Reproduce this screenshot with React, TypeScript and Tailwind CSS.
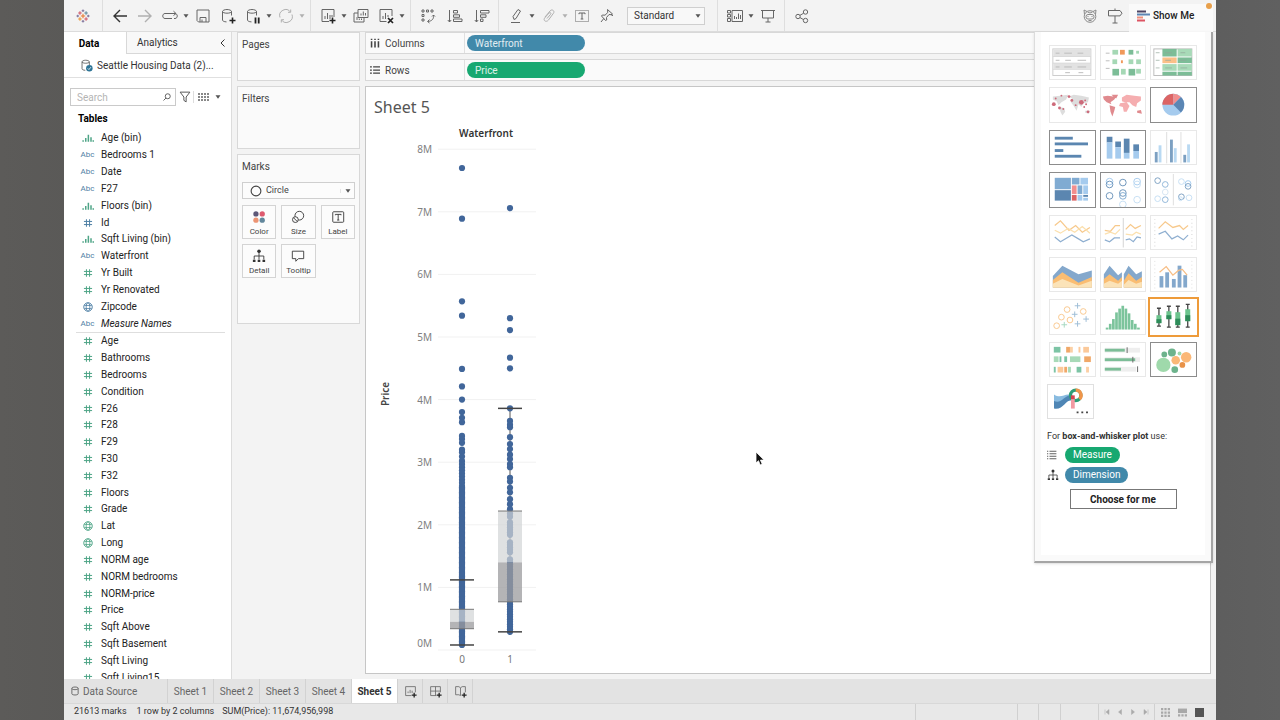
import React from 'react';

type FieldKind = 'bin' | 'abc' | 'num' | 'geo';

interface Field {
  name: string;
  kind: FieldKind;
  tone: string;
  italic?: boolean;
}

const GREEN = 'text-[#4fa587]';
const BLUE = 'text-[#4f80a5]';

const dimensions: Field[] = [
  { name: 'Age (bin)', kind: 'bin', tone: GREEN },
  { name: 'Bedrooms 1', kind: 'abc', tone: BLUE },
  { name: 'Date', kind: 'abc', tone: BLUE },
  { name: 'F27', kind: 'abc', tone: BLUE },
  { name: 'Floors (bin)', kind: 'bin', tone: GREEN },
  { name: 'Id', kind: 'num', tone: BLUE },
  { name: 'Sqft Living (bin)', kind: 'bin', tone: GREEN },
  { name: 'Waterfront', kind: 'abc', tone: BLUE },
  { name: 'Yr Built', kind: 'num', tone: GREEN },
  { name: 'Yr Renovated', kind: 'num', tone: GREEN },
  { name: 'Zipcode', kind: 'geo', tone: BLUE },
  { name: 'Measure Names', kind: 'abc', tone: BLUE, italic: true },
];

const measures: Field[] = [
  'Age', 'Bathrooms', 'Bedrooms', 'Condition', 'F26', 'F28', 'F29', 'F30', 'F32', 'Floors', 'Grade',
  'Lat', 'Long', 'NORM age', 'NORM bedrooms', 'NORM-price', 'Price', 'Sqft Above', 'Sqft Basement',
  'Sqft Living', 'Sqft Living15',
].map((name) => ({ name, kind: name === 'Lat' || name === 'Long' ? 'geo' : 'num', tone: GREEN }));

interface IconProps {
  children: React.ReactNode;
  className?: string;
}

const Icon: React.FC<IconProps> = ({ children, className = 'size-4' }) => (
  <svg viewBox="0 0 16 16" className={`shrink-0 ${className}`} fill="none" stroke="currentColor" aria-hidden="true">
    {children}
  </svg>
);

const Caret: React.FC<{ className?: string }> = ({ className = 'text-[#555]' }) => (
  <svg viewBox="0 0 6 4" className={`h-1 w-1.5 shrink-0 ${className}`} fill="currentColor" aria-hidden="true">
    <path d="M0.5 0.3h5L3 3.8z" />
  </svg>
);

const FieldIcon: React.FC<{ kind: FieldKind }> = ({ kind }) => {
  if (kind === 'abc') return <span className="text-[8px] leading-none">Abc</span>;
  if (kind === 'bin') {
    return (
      <Icon className="size-3">
        <path strokeWidth="2" d="M1.500 13v-2M5 13V8M8.500 13V3.500M12 13V7M15 13v-2" />
      </Icon>
    );
  }
  if (kind === 'geo') {
    return (
      <Icon className="size-[10px]">
        <circle cx="8" cy="8" r="6.800" strokeWidth="1.500" />
        <ellipse cx="8" cy="8" rx="3" ry="6.800" strokeWidth="1.300" />
        <path strokeWidth="1.300" d="M2 5.500h12M2 10.500h12" />
      </Icon>
    );
  }
  return (
    <Icon className="size-[10px]">
      <path strokeWidth="1.600" d="M5.500 2v12M10.500 2v12M1.500 5.500h13M1.500 10.500h13" />
    </Icon>
  );
};

const FieldRow: React.FC<{ field: Field }> = ({ field }) => (
  <li className="flex items-center gap-1.5 pl-4 text-[10px] leading-4 text-[#222]">
    <span className={`flex w-[15px] justify-center ${field.tone}`}>
      <FieldIcon kind={field.kind} />
    </span>
    <span className={field.italic ? 'italic' : ''}>{field.name}</span>
  </li>
);

/* ---------- toolbar ---------- */

interface ToolProps {
  label: string;
  children: React.ReactNode;
  caret?: boolean;
  muted?: boolean;
}

const Tool: React.FC<ToolProps> = ({ label, children, caret, muted }) => (
  <button aria-label={label} className={`flex items-center ${muted ? 'text-[#b0b0b0]' : 'text-[#666]'}`}>
    <span className="flex w-[25px] justify-center">
      <Icon>{children}</Icon>
    </span>
    {caret && (
      <span className="flex w-2 justify-center">
        <Caret className={muted ? 'text-[#b0b0b0]' : 'text-[#555]'} />
      </span>
    )}
  </button>
);

const Divider: React.FC<{ className?: string }> = ({ className = 'mx-1' }) => (
  <span className={`h-full w-px shrink-0 bg-[#dedede] ${className}`} />
);

const cylinder = <path d="M2.500 3.500c0-1 2-2 4.500-2s4.500 1 4.500 2-2 1.700-4.500 1.700-4.500-.7-4.500-1.700v8.500c0 1 1.500 1.800 4 1.900M11.500 3.500v4" />;
const plus = <path stroke="#222" strokeWidth="1.600" d="M12.500 9.500v6M9.500 12.500h6" />;

const Toolbar: React.FC = () => (
  <header className="flex h-8 shrink-0 items-center border-b border-[#dcdcdc] bg-[#f3f3f3]">
    <span className="flex w-[38px] justify-center">
      <svg viewBox="0 0 16 16" className="size-[14px]" strokeWidth="1.200" aria-label="Tableau">
        <path stroke="#e8762c" d="M8 5.500v5M5.500 8h5" />
        <path stroke="#c72037" d="M4.500 2.500v4M2.500 4.500h4M11.500 9.500v4M9.500 11.500h4" opacity=".75" />
        <path stroke="#5b879b" d="M11.500 2.500v4M9.500 4.500h4" />
        <path stroke="#eb912c" d="M4.500 9.500v4M2.500 11.500h4" />
        <path stroke="#7c7098" d="M8 .5v3M6.500 2h3M8 12.500v3M6.500 14h3M2 6.500v3M.5 8h3M14 6.500v3M12.500 8h3" />
      </svg>
    </span>
    <Divider className="mr-1" />
    <Tool label="Undo"><path strokeWidth="1.400" stroke="#333" d="M15 8H2M8 2L2 8l6 6" /></Tool>
    <Tool label="Redo" muted><path strokeWidth="1.400" d="M1 8h13M8 2l6 6-6 6" /></Tool>
    <Tool label="Replay" caret><path d="M10 10.500H3c-3 0-3-5 0-5h10c3 0 3 5 0 5h-1M11.500 3.200L14 5.500l-2.500 2" /></Tool>
    <Tool label="Save"><path d="M2 2h12v12H3.500L2 12.500zM5 14V9.500h6V14M7 11.500V14" /></Tool>
    <Tool label="New data source">{cylinder}{plus}</Tool>
    <Tool label="Pause auto updates" caret>{cylinder}<path stroke="#222" strokeWidth="1.800" d="M10.500 9.500v6M13.700 9.500v6" /></Tool>
    <Tool label="Run update" caret muted><path d="M2 9.500A6 6 0 0 1 12.500 4M14 6.500A6 6 0 0 1 3.500 12M12.700 1.500V4.300H10M3.300 14.500V11.700H6" /></Tool>
    <Divider />
    <Tool label="New worksheet" caret><path d="M9 13.500H2v-12h12V9M5 11V8M7.500 11V5M10 11V7M12 9V7" />{plus}</Tool>
    <Tool label="Duplicate"><path d="M5 1.500h10v8H5zM5 5H1v9h10V9.500M8 7.500v-2M10.300 7.500V3.500M12.500 7.500V5M4 12v-3M6.300 12V10.500M8.500 12v-1.500" /></Tool>
    <Tool label="Clear sheet" caret><path d="M8.500 13.500H2v-12h12V8M5 11V8M7.500 11V5M10 9V7" /><path stroke="#222" strokeWidth="1.700" d="M10 10l5 5M15 10l-5 5" /></Tool>
    <Divider />
    <span className="flex gap-0.5">
      <Tool label="Swap rows and columns"><path d="M2 2h2v2H2zM6.500 2h2v2h-2zM11 2h2v2h-2zM2 6.500h2v2H2zM2 11h2v2H2zM13.500 7c.5 4-1.500 6-5.500 6.500M12 8.500L13.500 7 15 8.500M9.500 11.500l-2 2 2 1.500" /></Tool>
      <Tool label="Sort ascending"><path d="M2.500 2v12M.8 12l1.700 2 1.700-2M6.500 2.500h4V5h-4zM6.500 6.800h6v2.500h-6zM6.500 11h8.500v2.500H6.500z" /></Tool>
      <Tool label="Sort descending"><path d="M2.500 2v12M.8 12l1.700 2 1.700-2M6.500 2.500H15V5H6.500zM6.500 6.800h5.500v2.500H6.500zM6.500 11H9v2.500H6.500z" /></Tool>
    </span>
    <Divider />
    <Tool label="Highlight" caret><path d="M6 11.500L5 8.500l5-7 2.500 1.500-4.500 7.500-2 1zM3 14.500h9" /></Tool>
    <Tool label="Group members" caret muted><path d="M4 9l5-6c2-2.500 5 0 3.500 2.200L7.500 12c-2 2.500-5.500 1-4-1.800L8 5c1.300-1 2.500 0 1.600 1.300L6 10.500" /></Tool>
    <Tool label="Show mark labels">
      <path strokeDasharray="1 1" d="M1.500 2.500h13v11h-13z" />
      <path d="M5 6.200V5h6v1.200M8 5v6M6.700 11h2.600" />
    </Tool>
    <Tool label="Fix axes"><path d="M8.500 1.500l5 4.500-1.500.7-2-.2-2.500 3 .2 2.500-1.200.5L2.500 8l.8-1 2.700.2L8.800 4.500zM4.800 10.500L2 14M12 6.700l2 1" /></Tool>
    <span className="relative ml-2 flex items-center">
      <select aria-label="Fit" className="h-[18px] w-[78px] appearance-none border border-[#cfcfcf] bg-[#f8f8f8] pl-1.5 text-[10px] text-[#333]">
        <option>Standard</option>
      </select>
      <span className="pointer-events-none absolute right-1"><Caret /></span>
    </span>
    <Divider className="mr-1 ml-3" />
    <Tool label="Show cards" caret><path d="M0.500 2.500h3v2.500h-3zM0.500 6.500h3V9h-3zM0.500 10.500h3v3h-3zM5 2.500h10.500v11H5zM7.500 11V8M9.500 11V9M11.500 11V5.500M13.500 11V7" /></Tool>
    <Tool label="Presentation mode"><path d="M1 2.500h14M2.500 2.500v7.500h11V2.500M8 10v4M5.500 14h5" /></Tool>
    <Divider />
    <Tool label="Share"><circle cx="4" cy="8.500" r="2.200" /><circle cx="11.500" cy="4" r="2.200" /><circle cx="11.500" cy="12.500" r="2.200" /><path d="M6 7.300l3.500-2M6 9.600l3.500 2" /></Tool>
    <span className="ml-auto flex">
      <Tool label="Einstein" muted>
        <g stroke="#8a8a8a">
          <circle cx="8" cy="8.500" r="5.800" />
          <path d="M2.500 6.500L2 2l3 1.500M13.500 6.500L14 2l-3 1.500M5.500 4l2.500 1 2.500-1" />
          <rect x="4" y="6.500" width="8" height="4.500" rx="2" />
          <path d="M6 8v1M10 8v1M6.500 12.500h3" />
        </g>
      </Tool>
      <Tool label="Guide"><path d="M8 .5v2M8 8v7M5.500 15h5M1.500 2.500H13l2 2.700-2 2.700H1.500z" /></Tool>
    </span>
    <button className="mt-1 mr-[3px] ml-0.5 flex h-7 w-[84px] items-center gap-0.5 bg-[#fafafa] pb-1 pl-2 text-[10px] font-medium text-[#222]">
      <svg viewBox="0 0 14 14" className="size-[14px]" aria-hidden="true">
        <path stroke="#4c4464" strokeWidth="2" d="M0 2.500h9" />
        <path stroke="#5c86b4" strokeWidth="2" d="M0 5.500h13" />
        <path stroke="#f0907c" strokeWidth="2" d="M0 8.500h6" />
        <path stroke="#dd5463" strokeWidth="2" d="M0 11.500h8" />
      </svg>
      Show Me
    </button>
  </header>
);

/* ---------- data pane ---------- */

const DataPane: React.FC = () => (
  <aside className="flex w-[168px] shrink-0 flex-col overflow-hidden border-r border-[#dcdcdc] bg-white text-[10px] text-[#333]">
    <div className="flex h-[22px] shrink-0">
      <button className="w-[62px] pr-3 text-center font-bold text-black">Data</button>
      <button className="flex flex-1 items-center justify-between border-b border-l border-[#d8d8d8] bg-[#f8f8f8] pr-1 pl-2.5">
        Analytics
        <Icon className="size-2"><path strokeWidth="2" d="M11 1L4 8l7 7" /></Icon>
      </button>
    </div>
    <button className="flex h-6 shrink-0 items-center gap-1 border-b border-[#e0e0e0] pl-4">
      <Icon className="size-[13px] text-[#555]">
        {cylinder}
        <circle cx="11.500" cy="11.500" r="4" fill="#2d7496" stroke="none" />
        <path stroke="#fff" d="M9.500 11.500l1.500 1.500 2.500-3" />
      </Icon>
      Seattle Housing Data (2)...
    </button>
    <div className="mt-2.5 flex h-[18px] shrink-0 items-center pl-1.5 text-[#555]">
      <label className="flex h-full w-[106px] items-center border border-[#cacaca] pr-1 pl-1.5">
        <input aria-label="Search fields" placeholder="Search" className="w-full min-w-0 outline-none placeholder:text-[#b4b4b4]" />
        <Icon className="size-2"><circle cx="9.500" cy="6.500" r="5" strokeWidth="1.800" /><path strokeWidth="1.800" d="M6 10l-5 5" /></Icon>
      </label>
      <button aria-label="Filter fields" className="ml-[3px]">
        <Icon className="size-3"><path strokeWidth="1.300" d="M1.500 1.500h13L9.500 8v6.500l-3-2V8z" /></Icon>
      </button>
      <span className="mx-0.5 h-3 w-px bg-[#ddd]" />
      <button aria-label="View as" className="ml-0.5 flex items-center gap-1.5">
        <svg viewBox="0 0 11 8" className="h-2 w-[11px]" fill="#888" aria-hidden="true">
          {[0, 3, 6].map((y) => [0, 3, 6, 9].map((x) => <rect key={`${x}-${y}`} x={x} y={y} width="2" height="2" />))}
        </svg>
        <Caret />
      </button>
    </div>
    <h2 className="mt-1.5 h-[18px] shrink-0 pl-3.5 leading-[14px] font-bold text-black">Tables</h2>
    <ul className="grid h-[202px] shrink-0 auto-rows-fr">
      {dimensions.map((f) => <FieldRow key={f.name} field={f} />)}
    </ul>
    <hr className="mr-1.5 ml-3 shrink-0 border-[#dedede]" />
    <ul className="grid h-[353px] shrink-0 auto-rows-fr">
      {measures.map((f) => <FieldRow key={f.name} field={f} />)}
    </ul>
  </aside>
);

/* ---------- cards ---------- */

const hierarchy = (
  <>
    <circle cx="8" cy="2.500" r="2" fill="currentColor" stroke="none" />
    <path d="M8 3v9M2.500 12V8h11v4" />
    <path strokeWidth="2.500" d="M1 13.500h3M6.500 13.500h3M12 13.500h3" />
  </>
);

const markButtons = [
  {
    label: 'Color',
    icon: (
      <g stroke="none">
        <circle cx="4.500" cy="4.500" r="3" fill="#5d5878" />
        <circle cx="11.700" cy="4.500" r="3" fill="#dd5a6e" />
        <circle cx="4.500" cy="11.700" r="3" fill="#ec9473" />
        <circle cx="11.700" cy="11.700" r="3" fill="#62879c" />
      </g>
    ),
  },
  { label: 'Size', icon: <><circle cx="9.500" cy="6.500" r="5" /><circle cx="5" cy="11" r="3.300" fill="#fafafa" /><path d="M3 9l4 4" /></> },
  { label: 'Label', icon: <><rect x="2" y="2" width="12.500" height="12" rx="1" /><path d="M5 6V5h6.500v1M8.200 5v6.500M7 11.500h2.500" /></> },
  { label: 'Detail', icon: hierarchy },
  { label: 'Tooltip', icon: <path d="M1.500 2.500h13v8.500H8.500L5.500 14v-3h-4z" /> },
];

const Cards: React.FC = () => (
  <div className="flex w-[133px] shrink-0 flex-col gap-[5px] bg-[#f3f3f3] pr-[5px] pl-[5px] text-[10px] text-[#444]">
    <section className="h-[49px] border border-[#d8d8d8] bg-[#fafafa] px-1 pt-1"><h2>Pages</h2></section>
    <section className="h-[63px] border border-[#d8d8d8] bg-[#fafafa] px-1 pt-1"><h2>Filters</h2></section>
    <section className="h-[170px] border border-[#d8d8d8] bg-[#fafafa] px-1 pt-1">
      <h2>Marks</h2>
      <div className="relative mt-2 flex items-center">
        <select aria-label="Mark type" className="h-[17px] w-full appearance-none border border-[#cfcfcf] bg-[#fcfcfc] pl-[23px] text-[9px]">
          <option>Circle</option>
        </select>
        <Icon className="pointer-events-none absolute left-2 size-3"><circle cx="8" cy="8" r="6.500" strokeWidth="1.500" /></Icon>
        <span className="pointer-events-none absolute right-1 border-l border-[#e4e4e4] pl-1"><Caret /></span>
      </div>
      <div className="mt-1.5 grid grid-cols-3 gap-[5px]">
        {markButtons.map((m) => (
          <button key={m.label} className="flex h-[34px] flex-col items-center justify-between border border-[#d4d4d4] bg-[#fcfcfc] pt-1 text-[8px] leading-3">
            <Icon className="size-[14px] text-[#333]">{m.icon}</Icon>
            {m.label}
          </button>
        ))}
      </div>
    </section>
  </div>
);

/* ---------- shelves and chart ---------- */

interface ShelfProps {
  label: string;
  pill: string;
  color: string;
  icon: React.ReactNode;
}

const Shelf: React.FC<ShelfProps> = ({ label, pill, color, icon }) => (
  <div className="flex h-[22px] items-center border border-[#d8d8d8] bg-[#fafafa] text-[10px] text-[#444]">
    <div className="flex h-full w-[99px] items-center gap-[5px] border-r border-[#e0e0e0] pl-1">
      <Icon className="size-[10px]">{icon}</Icon>
      {label}
    </div>
    <button className={`ml-0.5 h-4 w-[118px] rounded-full px-2 text-left text-white/85 ${color}`}>{pill}</button>
  </div>
);

// vertical scale: values in millions, zero sits at y = 530
const scale = (v: number) => 530 - v * 62.6;

const range = (from: number, to: number, step: number) =>
  Array.from({ length: Math.round((from - to) / step) + 1 }, (_, i) => from - i * step);

const groups = [
  {
    label: '0',
    x: 96,
    points: [7.7, 6.89, 5.57, 5.34, 4.49, 4.21, 4, 3.8, 3.71, 3.64, 3.42, 3.37, 3.31, 3.2, 3.16, 3.09, ...range(3.02, 2.6, 0.05), ...range(2.6, 0.08, 0.02)],
    box: { low: 0.08, q1: 0.34, median: 0.45, q3: 0.65, high: 1.12 },
  },
  {
    label: '1',
    x: 144,
    points: [7.06, 5.3, 5.11, 4.67, 4.5, 3.86, 3.66, 3.6, 3.56, 3.4, 3.29, 3.21, 3.12, 3.05, 2.97, 2.92, 2.75, 2.69, 2.59, 2.52, 2.41, 2.33, 2.25, 2.18, 2.13, ...range(2.04, 1.82, 0.04), ...range(1.72, 1.54, 0.04), ...range(1.45, 0.29, 0.04)],
    box: { low: 0.29, q1: 0.77, median: 1.4, q3: 2.22, high: 3.86 },
  },
];

const Chart: React.FC = () => (
  <svg viewBox="0 0 190 550" className="block h-[550px] w-[190px] font-['Noto_Sans',sans-serif] text-[10px]" role="img" aria-label="Price by Waterfront">
    <text x="120" y="17" textAnchor="middle" className="font-semibold" fill="#333">Waterfront</text>
    <text transform="translate(23 274) rotate(-90)" textAnchor="middle" className="font-semibold" fill="#444">Price</text>
    {range(8, 0, 1).map((v) => (
      <g key={v}>
        <line x1="72" x2="170" y1={scale(v)} y2={scale(v)} stroke="#f1f1f1" />
        <text x="66" y={v === 0 ? 527 : scale(v) + 4} textAnchor="end" fill="#808080">{v}M</text>
      </g>
    ))}
    {groups.map(({ label, x, points, box }) => (
      <g key={label}>
        <line x1={x} x2={x} y1={scale(box.high)} y2={scale(box.low)} stroke="#555" />
        {points.map((v, i) => <circle key={i} cx={x} cy={scale(v)} r="3.100" fill="#41669a" />)}
        <rect x={x - 12} width="24" y={scale(box.q3)} height={scale(box.median) - scale(box.q3)} fill="#d2d4d5" fillOpacity=".7" />
        <rect x={x - 12} width="24" y={scale(box.median)} height={scale(box.q1) - scale(box.median)} fill="#9b9b9d" fillOpacity=".75" />
        {[box.q3, box.q1].map((v) => <line key={v} x1={x - 12} x2={x + 12} y1={scale(v)} y2={scale(v)} stroke="#777" />)}
        {[box.high, box.low].map((v) => <line key={v} x1={x - 12} x2={x + 12} y1={scale(v)} y2={scale(v)} stroke="#444" strokeWidth="1.500" />)}
        <text x={x} y="543" textAnchor="middle" fill="#777">{label}</text>
      </g>
    ))}
  </svg>
);

const Worksheet: React.FC = () => (
  <main className="flex min-w-0 flex-1 flex-col gap-[5px] bg-[#f3f3f3] pr-[5px] pb-[5px]">
    <Shelf label="Columns" pill="Waterfront" color="bg-[#4189aa]" icon={<path strokeWidth="2.500" d="M2.500 1v2M2.500 5v10M8 1v2M8 5v10M13.500 1v2M13.500 5v10" />} />
    <Shelf label="Rows" pill="Price" color="bg-[#17a871]" icon={<path strokeWidth="2" d="M0 3h3M5 3h11M0 8h3M5 8h11M0 13h3M5 13h11" />} />
    <div className="min-h-0 flex-1 overflow-hidden border border-[#c6c6c6] bg-white">
      <h1 className="h-[33px] pt-2 pl-2 font-['Noto_Sans',sans-serif] text-base leading-6 text-[#555]">Sheet 5</h1>
      <Chart />
    </div>
  </main>
);

/* ---------- show me ---------- */

const bar = (x: number, y: number, w: number, h: number, fill: string) => (
  <rect key={`${x}-${y}-${w}-${h}`} x={x} y={y} width={w} height={h} fill={fill} />
);

const ring = (cx: number, cy: number, stroke: string, r = 3.5) => (
  <circle key={`${cx}-${cy}`} cx={cx} cy={cy} r={r} fill="none" stroke={stroke} />
);

interface Thumb {
  label: string;
  state?: 'on' | 'active';
  art: React.ReactNode;
}

const thumbs: Thumb[] = [
  {
    label: 'Text table',
    art: (
      <>
        <rect x="3" y="3" width="40" height="28" fill="#fff" stroke="#ccc" />
        {bar(3.5, 3.5, 39, 7, '#e2e2e2')}
        {bar(3.5, 18, 39, 6, '#e2e2e2')}
        <path stroke="#d8d8d8" d="M3 11h40M3 18h40M3 24.500h40" />
        <path stroke="#bbb" d="M6 7.500h4M15 7.500h8M29 7.500h6M6 15h4M16 15h6M29 15h9M6 22h4M15 22h8M29 22h9M16 28h5M30 28h5" />
      </>
    ),
  },
  {
    label: 'Heat map',
    art: (
      <>
        <path stroke="#bbb" d="M5 7.500h4M5 15.500h4M5 23.500h4" />
        {bar(12, 4, 6, 5, '#a5d8b5')}{bar(20, 4, 5, 5, '#f0995a')}{bar(29, 4, 5, 5, '#7cbd97')}{bar(37, 5, 3, 3, '#a5d8b5')}
        {bar(12, 14, 5, 5, '#a5d8b5')}{bar(21, 15, 2, 3, '#f0995a')}{bar(29, 14, 5, 5, '#a5d8b5')}{bar(37, 14, 5, 5, '#a5d8b5')}
        {bar(12, 24, 7, 7, '#7cbd97')}{bar(21, 24, 5, 6, '#a5d8b5')}{bar(29, 24, 7, 7, '#7cbd97')}{bar(37, 24, 5, 5, '#a5d8b5')}
      </>
    ),
  },
  {
    label: 'Highlight table',
    art: (
      <>
        <rect x="3" y="3" width="40" height="28" fill="#fff" stroke="#bbb" />
        {bar(12, 3, 15, 8, '#7cbd97')}{bar(28, 3, 15, 8, '#a8dab8')}
        {bar(12, 12, 15, 6, '#fbc088')}{bar(28, 12, 15, 6, '#7cbd97')}
        {bar(12, 19, 15, 7, '#a8dab8')}{bar(28, 19, 15, 7, '#a8dab8')}
        {bar(12, 27, 15, 4, '#7cbd97')}{bar(28, 27, 15, 4, '#7cbd97')}
        <path stroke="#90a599" d="M5 7h4M15 7h7M31 7h5M5 15h4M15 15h6M31 15h6M5 23h4M15 23h7M31 23h7" opacity=".7" />
      </>
    ),
  },
  {
    label: 'Symbol map',
    art: (
      <>
        <path fill="#ddd" d="M3 9l8-1 8-1-2 5-5 3-3 3-2-4-4-2zM10 20l5 1 1 4-3 4-2-4zM20 9l5-2 8 1 8 2-1 5-5 1-2 4-3-3-2 7-3-5-3-4 1-4zM37 24l5 0-1 3-4-1z" />
        {[[4, 17, 2], [6, 11, 1], [12, 8, 1], [20, 9, 1.5], [23, 13, 1.5], [33, 15, 2.5], [37, 13, 1], [36, 20, 1], [38, 17, 1], [10, 21, 1.5], [14, 22, 1], [40, 25, 1.5], [27, 18, 1]].map(([x, y, r]) => (
          <circle key={`${x}-${y}`} cx={x} cy={y} r={r} fill="#cd6a7a" />
        ))}
      </>
    ),
  },
  {
    label: 'Filled map',
    art: (
      <>
        <path fill="#e08a8e" d="M2 9l5-1 6 1 3 0-2 3-4 3 1 2-5-2-3-3zM11 7h7l-2 4-3-2zM9 18l6 2-1 4-2 6-2-5z" />
        <path fill="#f5aeb0" d="M22 10l5-3 8 1 7 1 0 4-4 3-1 4-4-2-3-3-5 0-3-1zM20 16l7-1 3 4-3 6-3 0-1-5-4-1z" />
        <path fill="#e08a8e" d="M38 24l4-1 1 4-5-1z" />
      </>
    ),
  },
  {
    label: 'Pie chart',
    state: 'on',
    art: (
      <>
        <circle cx="23.500" cy="17.500" r="11.500" fill="#a5cbee" />
        <path fill="#dc6464" d="M23.500 17.500H12A11.500 11.500 0 0 1 23.500 6z" />
        <path fill="#f28e8e" d="M23.500 17.500V6a11.500 11.500 0 0 1 8 3.300z" />
        <path fill="#5b86b4" d="M23.500 17.500l8-8.200a11.500 11.500 0 0 1 0 16.400z" />
      </>
    ),
  },
  { label: 'Horizontal bars', state: 'on', art: <>{bar(5, 6, 19, 3, '#5b86b0')}{bar(5, 12, 35, 3, '#5b86b0')}{bar(5, 19, 9, 3, '#5b86b0')}{bar(5, 25, 28, 3, '#5b86b0')}</> },
  {
    label: 'Stacked bars',
    state: 'on',
    art: (
      <>
        {bar(6, 6, 6, 6, '#5b86b0')}{bar(6, 12, 6, 17, '#a5cbee')}
        {bar(15, 11, 6, 6, '#5b86b0')}{bar(15, 17, 6, 12, '#a5cbee')}
        {bar(24, 8, 6, 15, '#5b86b0')}{bar(24, 23, 6, 6, '#a5cbee')}
        {bar(34, 14, 6, 7, '#5b86b0')}{bar(34, 21, 6, 8, '#a5cbee')}
      </>
    ),
  },
  {
    label: 'Side-by-side bars',
    art: (
      <>
        <path stroke="#ddd" d="M16.500 1v33M31.500 1v33" />
        {bar(4, 22, 3, 11, '#7ca0c2')}{bar(8, 15, 3, 18, '#b9d9f2')}
        {bar(20, 9, 3, 24, '#7ca0c2')}{bar(24, 18, 3, 15, '#b9d9f2')}
        {bar(34, 25, 3, 8, '#7ca0c2')}{bar(38, 14, 3, 19, '#b9d9f2')}
      </>
    ),
  },
  {
    label: 'Treemap',
    state: 'on',
    art: (
      <>
        {bar(5, 5, 17, 12, '#80abd2')}{bar(5, 18, 17, 11, '#5b86b0')}
        {bar(23, 5, 8, 7, '#80abd2')}{bar(32, 5, 8, 7, '#a5cbee')}
        {bar(23, 13, 5, 9, '#f28e8e')}{bar(23, 23, 5, 6, '#dc6464')}
        {bar(29, 13, 5, 9, '#80abd2')}{bar(35, 13, 5, 9, '#a5cbee')}
        {bar(29, 23, 5, 6, '#a5cbee')}{bar(35, 23, 5, 2, '#5b86b0')}{bar(35, 26, 5, 3, '#a5cbee')}
      </>
    ),
  },
  {
    label: 'Circle views',
    state: 'on',
    art: (
      <>
        {ring(9, 9, '#a5cbee')}{ring(9, 12, '#6c93bb')}{ring(9, 24, '#6c93bb')}
        {ring(23, 10, '#6c93bb')}{ring(23, 21, '#6c93bb')}{ring(23, 24, '#80abd2')}{ring(23, 33, '#c5def3')}
        {ring(38, 9, '#a5cbee')}{ring(38, 12, '#c5def3')}{ring(38, 28, '#c5def3')}
      </>
    ),
  },
  {
    label: 'Side-by-side circles',
    art: (
      <>
        <path stroke="#ddd" d="M23.500 1v33" />
        {ring(7, 8, '#7ca0c2', 3)}{ring(15, 12, '#8fb5d8', 3)}{ring(15, 20, '#d5e5f2', 3)}{ring(7, 27, '#c5def3', 3)}{ring(15, 28, '#8fb5d8', 3)}
        {ring(32, 9, '#c5def3', 3)}{ring(39, 11, '#a5cbee', 3)}{ring(39, 14, '#7ca0c2', 3)}{ring(32, 25, '#7ca0c2', 3)}{ring(40, 26, '#c5def3', 3)}{ring(31, 27, '#c5def3', 2)}
      </>
    ),
  },
  {
    label: 'Lines (continuous)',
    art: (
      <g fill="none" strokeWidth="1.300">
        <path stroke="#f7c98c" d="M5 10l6-5 9 10 7-5 7 7 8-5" />
        <path stroke="#fbe0ae" d="M5 15l6 3 8-5 7 4 8-6 8 7" />
        <path stroke="#8fafd0" d="M5 22l6 5 12-7 7 4 5 3 7-3" />
      </g>
    ),
  },
  {
    label: 'Lines (discrete)',
    art: (
      <g fill="none" strokeWidth="1.300">
        <path stroke="#ddd" d="M23.500 2v31" />
        <path stroke="#f7c98c" d="M4 15l6 1 5-6h5M26 14l5-5 5 4 6-3" />
        <path stroke="#fbe0ae" d="M4 19l6-2 5 2 5-5M26 19l7 1 4-3 5 2" />
        <path stroke="#8fafd0" d="M4 25l5 2 5-4h6M26 25l4-1 4 3 4-5 4 1" />
      </g>
    ),
  },
  {
    label: 'Dual lines',
    art: (
      <g fill="none" strokeWidth="1.300">
        <path stroke="#ddd" strokeDasharray="1 3" d="M4 3v29M43 3v29" />
        <path stroke="#f7c98c" d="M8 13l7-7 8 6 7-2 4 4 5-4" />
        <path stroke="#8fafd0" d="M8 19l7-3 7 8 6-3 6 4 5-5" />
      </g>
    ),
  },
  {
    label: 'Area (continuous)',
    art: (
      <>
        <path fill="#84a8cc" d="M3 19L13 8l17 9 14-4v18H3z" />
        <path fill="#fabd72" d="M3 23l10-8 17 11 14-6v11H3z" />
        <path fill="#fbe3b8" d="M3 27l10-5 17 7 14-5v7H3z" />
      </>
    ),
  },
  {
    label: 'Area (discrete)',
    art: (
      <>
        <path fill="#84a8cc" d="M3 17L9 8l9 10 4-3v16H3zM24 17l5-9 8 9 6-3v17H24z" />
        <path fill="#fabd72" d="M3 22l6-5 9 7 4-4v11H3zM24 24l5-8 8 8 6-4v11H24z" />
        <path fill="#fbe3b8" d="M3 27l6-3 9 3 4-3v7H3zM24 28l5-5 8 4 6-2v6H24z" />
      </>
    ),
  },
  {
    label: 'Dual combination',
    art: (
      <>
        <path stroke="#ddd" strokeDasharray="1 3" d="M4 3v29M43 3v29" />
        {bar(9, 19, 4, 12, '#84a8cc')}{bar(15, 15, 4, 16, '#84a8cc')}{bar(22, 22, 4, 9, '#84a8cc')}{bar(28, 8, 4, 23, '#84a8cc')}{bar(34, 18, 4, 13, '#84a8cc')}
        <path fill="none" stroke="#f7bd84" strokeWidth="1.300" d="M9 15l7-6 7 9 6-5 4-1 5 6" />
      </>
    ),
  },
  {
    label: 'Scatter plot',
    art: (
      <>
        {ring(18, 10, '#f9c78d', 3)}{ring(35, 12, '#f9c78d', 3)}{ring(12, 18, '#f9c78d', 3)}{ring(21, 21, '#f9c78d', 3)}{ring(7, 27, '#f9c78d', 3)}
        <path stroke="#9dbdd6" d="M29 3v6M26 6h6M26 12v6M23 15h6M38 17v6M35 20h6M29 22v6M26 25h6" />
        <path stroke="#a5d8c0" d="M15 23v6M12 26h6" />
      </>
    ),
  },
  {
    label: 'Histogram',
    art: <>{[2, 6, 11, 18, 22, 25, 22, 17, 10, 6, 2].map((h, i) => bar(5 + i * 3.3, 31 - h, 2.8, h, '#7cc49c'))}</>,
  },
  {
    label: 'Box-and-whisker plot',
    state: 'active',
    art: (
      <>
        {[[9, 9, 27, 16, 24], [19, 7, 28, 12, 20], [28, 7, 28, 13, 26], [38, 5, 28, 10, 22]].map(([x, top, bottom, q3, q1]) => (
          <g key={x}>
            <path stroke="#444" strokeWidth="1.300" d={`M${x} ${top}V${bottom}M${x - 2} ${top}h4M${x - 2} ${bottom}h4`} />
            {bar(x - 2.5, q3, 5, q1 - q3, '#6bc48d')}
            {bar(x - 2.5, (q3 + q1) / 2, 5, (q1 - q3) / 2, '#2e8c5a')}
          </g>
        ))}
      </>
    ),
  },
  {
    label: 'Gantt chart',
    art: (
      <>
        {bar(4, 4, 7, 6, '#7cc4a5')}{bar(17, 4, 4, 6, '#f0a868')}{bar(21, 4, 3, 6, '#fbd0a5')}{bar(30, 4, 2, 6, '#fbc99a')}{bar(35, 4, 6, 6, '#fbc99a')}
        {bar(4, 14, 5, 6, '#a8dab8')}{bar(10, 14, 2, 6, '#7cc4a5')}{bar(15, 14, 3, 6, '#7cc4a5')}{bar(21, 14, 11, 6, '#a8dab8')}{bar(36, 14, 7, 6, '#f0a868')}
        {bar(4, 25, 2, 6, '#7cc4a5')}{bar(8, 25, 6, 6, '#fbc99a')}{bar(15, 25, 3, 6, '#f0a868')}{bar(19, 25, 3, 6, '#a8dab8')}{bar(28, 25, 5, 6, '#7cc4a5')}{bar(38, 25, 3, 6, '#fbd0a5')}
      </>
    ),
  },
  {
    label: 'Bullet graph',
    art: (
      <>
        {bar(4, 5, 37, 5, '#eee')}{bar(4, 15, 37, 5, '#eee')}{bar(4, 25, 33, 5, '#eee')}
        {bar(4, 6, 21, 3, '#7cbd97')}{bar(4, 16, 32, 3, '#7cbd97')}{bar(4, 26, 17, 3, '#7cbd97')}
        <path stroke="#666" d="M27.500 4.500v6M33.500 14.500v6M38.500 24.500v6" />
      </>
    ),
  },
  {
    label: 'Packed bubbles',
    state: 'on',
    art: (
      <>
        {[[13, 23, 7.5, '#9fd9ab'], [14, 12, 3, '#6db38c'], [22, 10, 4.2, '#6db38c'], [30, 11, 2, '#9fd9ab'], [26, 18, 4.5, '#fbb877'], [37, 15, 5.5, '#fbb877'], [33, 23, 3, '#e89248'], [25, 28, 3.5, '#6db38c']].map(([x, y, r, fill]) => (
          <circle key={`${x}-${y}`} cx={x} cy={y} r={r} fill={String(fill)} />
        ))}
      </>
    ),
  },
];

const thumbFrame = {
  idle: 'border border-[#e8e8e8]',
  on: 'border border-[#8c8c8c]',
  active: 'outline-2 outline-[#ee9b3a]',
};

const ShowMe: React.FC = () => (
  <section aria-label="Show Me" className="absolute top-8 right-[3px] w-[179px] border-r-2 border-b-2 border-l border-[#a5a5a5] border-l-[#dcdcdc] bg-[#fafafa] px-1.5 pb-1.5 text-[10px] text-[#333] shadow-sm">
    <div className="bg-white px-2 pt-[13px] pb-[46px]">
      <div className="grid h-[332px] auto-rows-fr grid-cols-3 gap-x-1 gap-y-[7px]">
        {thumbs.map((t) => (
          <button key={t.label} aria-label={t.label} className={`min-h-0 bg-white ${thumbFrame[t.state ?? 'idle']}`}>
            <svg viewBox="0 0 47 35" className="size-full" aria-hidden="true">{t.art}</svg>
          </button>
        ))}
      </div>
      <button aria-label="More chart types" className="mt-[7px] -ml-0.5 block h-[35px] w-[47px] border border-[#e0e0e0]">
        <svg viewBox="0 0 47 35" className="size-full" aria-hidden="true">
          <path fill="#89bbe0" d="M6 10c9 6 12-4 21 2v5C18 13 15 26 6 24z" />
          <path fill="#4f86b5" d="M6 17c9 4 12-9 20-5v4c-8-1-10 11-20 9z" />
          <circle cx="29" cy="11" r="5.500" fill="none" stroke="#2f9e77" strokeWidth="3.500" />
          <path fill="none" stroke="#f0954a" strokeWidth="3.500" d="M29 5.500a5.500 5.500 0 0 1 4 9.500" />
          {bar(24, 11, 4, 4, '#d9434e')}{bar(24, 15, 4, 10, '#f29aa2')}
          <path stroke="#444" strokeWidth="2" d="M30 29h2M35 29h2M40 29h2" />
        </svg>
      </button>
      <p className="mt-2.5 -ml-0.5 text-[9px] leading-[14px] whitespace-nowrap">For <b>box-and-whisker plot</b> use:</p>
      <div className="mt-1 -ml-0.5 grid grid-cols-[18px_auto] items-center justify-start gap-y-1 text-white">
        <Icon className="size-[10px] text-[#555]"><path strokeWidth="1.500" d="M0 2h2M4 2h11M0 6h2M4 6h11M0 10h2M4 10h11M0 14h2M4 14h11" /></Icon>
        <span className="justify-self-start rounded-full bg-[#17a871] px-2 leading-4">Measure</span>
        <Icon className="size-3 text-[#333]">{hierarchy}</Icon>
        <span className="justify-self-start rounded-full bg-[#4189aa] px-2 leading-4">Dimension</span>
      </div>
      <button className="mx-auto mt-1.5 block h-5 w-[107px] border border-[#777] bg-white font-bold text-[#222]">Choose for me</button>
    </div>
  </section>
);

/* ---------- footer ---------- */

const SheetTabs: React.FC = () => (
  <nav className="flex h-6 shrink-0 bg-[#e3e3e3] text-[10px] text-[#666]">
    <button className="flex w-[104px] items-center gap-[3px] border-r border-[#d2d2d2] pl-1.5">
      <Icon className="size-[10px]"><path strokeWidth="1.500" d="M3 3.500C3 1 13 1 13 3.500v9c0 2.500-10 2.500-10 0zM3 4c0 2.500 10 2.500 10 0" /></Icon>
      Data Source
    </button>
    {['Sheet 1', 'Sheet 2', 'Sheet 3', 'Sheet 4', 'Sheet 5'].map((s) => (
      <button key={s} className={`w-[46px] border-r border-[#d2d2d2] ${s === 'Sheet 5' ? 'bg-white font-bold text-[#333]' : ''}`}>{s}</button>
    ))}
    {[
      { label: 'New worksheet', d: 'M9 13H2V2h12v7M5 10V8M7.500 10V6M10 10V7' },
      { label: 'New dashboard', d: 'M9 13H2V2h12v7M8 2v11M2 7.500h12' },
      { label: 'New story', d: 'M8 13L6 12H2V2h4l2 1.500L10 2h4v7M8 3.500V13' },
    ].map((b) => (
      <button key={b.label} aria-label={b.label} className="flex w-[25px] items-center justify-center border-r border-[#d2d2d2]">
        <Icon className="size-[13px]"><path d={b.d} />{plus}</Icon>
      </button>
    ))}
  </nav>
);

const StatusBar: React.FC = () => (
  <footer className="flex h-[17px] shrink-0 items-center border-t border-[#d8d8d8] bg-[#e8e8e8] text-[9px] text-[#333]">
    <span className="ml-2.5">21613 marks</span>
    <span className="ml-2.5">1 row by 2 columns</span>
    <span className="ml-2">SUM(Price): 11,674,956,998</span>
    <span className="ml-auto flex h-full">
      <span className="w-[102px] border-l border-[#d0d0d0]" />
      <span className="w-[21px] border-l border-[#d0d0d0]" />
      <span className="w-[22px] border-l border-[#d0d0d0]" />
      <span className="w-[38px] border-l border-[#d0d0d0]" />
    </span>
    <span className="flex h-full items-center gap-[5px] border-l border-[#d0d0d0] px-1 text-[#aaa]">
      {[
        ['First sheet', 'M4 3v10M12 3v10L6 8z'],
        ['Previous sheet', 'M11 3v10L5 8z'],
        ['Next sheet', 'M5 3v10l6-5z'],
        ['Last sheet', 'M12 3v10M4 3v10l6-5z'],
      ].map(([label, d]) => (
        <button key={label} aria-label={label}>
          <Icon className="size-2"><path fill="currentColor" d={d} /></Icon>
        </button>
      ))}
    </span>
    <span className="flex h-full items-center gap-2 border-l border-[#d0d0d0] pr-3 pl-1.5 text-[#a8a8a8]">
      <button aria-label="Show tabs">
        <Icon className="size-[9px]"><path strokeWidth="4" strokeDasharray="4 2" d="M0 2h16M0 8h16M0 14h16" /></Icon>
      </button>
      <button aria-label="Show filmstrip">
        <Icon className="size-[9px]"><path strokeWidth="8" d="M0 5h16" /><path strokeWidth="4" strokeDasharray="4 2" d="M0 13h16" /></Icon>
      </button>
      <button aria-label="Show sheet sorter" className="size-[9px] bg-[#555]" />
    </span>
  </footer>
);

const App: React.FC = () => (
  <div className="h-screen overflow-hidden bg-linear-to-r from-[#5c5b59] via-[#4a4a4a] to-[#606060] px-16 font-[Roboto,sans-serif]">
    <div className="relative flex h-full flex-col">
      <Toolbar />
      <div className="flex min-h-0 flex-1">
        <DataPane />
        <Cards />
        <Worksheet />
      </div>
      <SheetTabs />
      <StatusBar />
      <ShowMe />
      <span className="absolute top-[3px] right-1 size-1.5 rounded-full bg-[#e8a04c]" />
      <svg viewBox="0 0 10 15" className="absolute top-[451px] left-[691px] h-[15px] w-2.5" aria-hidden="true">
        <path d="M1 1v11l2.500-2.300L5.200 14l2-.9-1.800-4H9z" fill="#111" stroke="#fff" strokeWidth=".8" />
      </svg>
    </div>
  </div>
);

export default App;
